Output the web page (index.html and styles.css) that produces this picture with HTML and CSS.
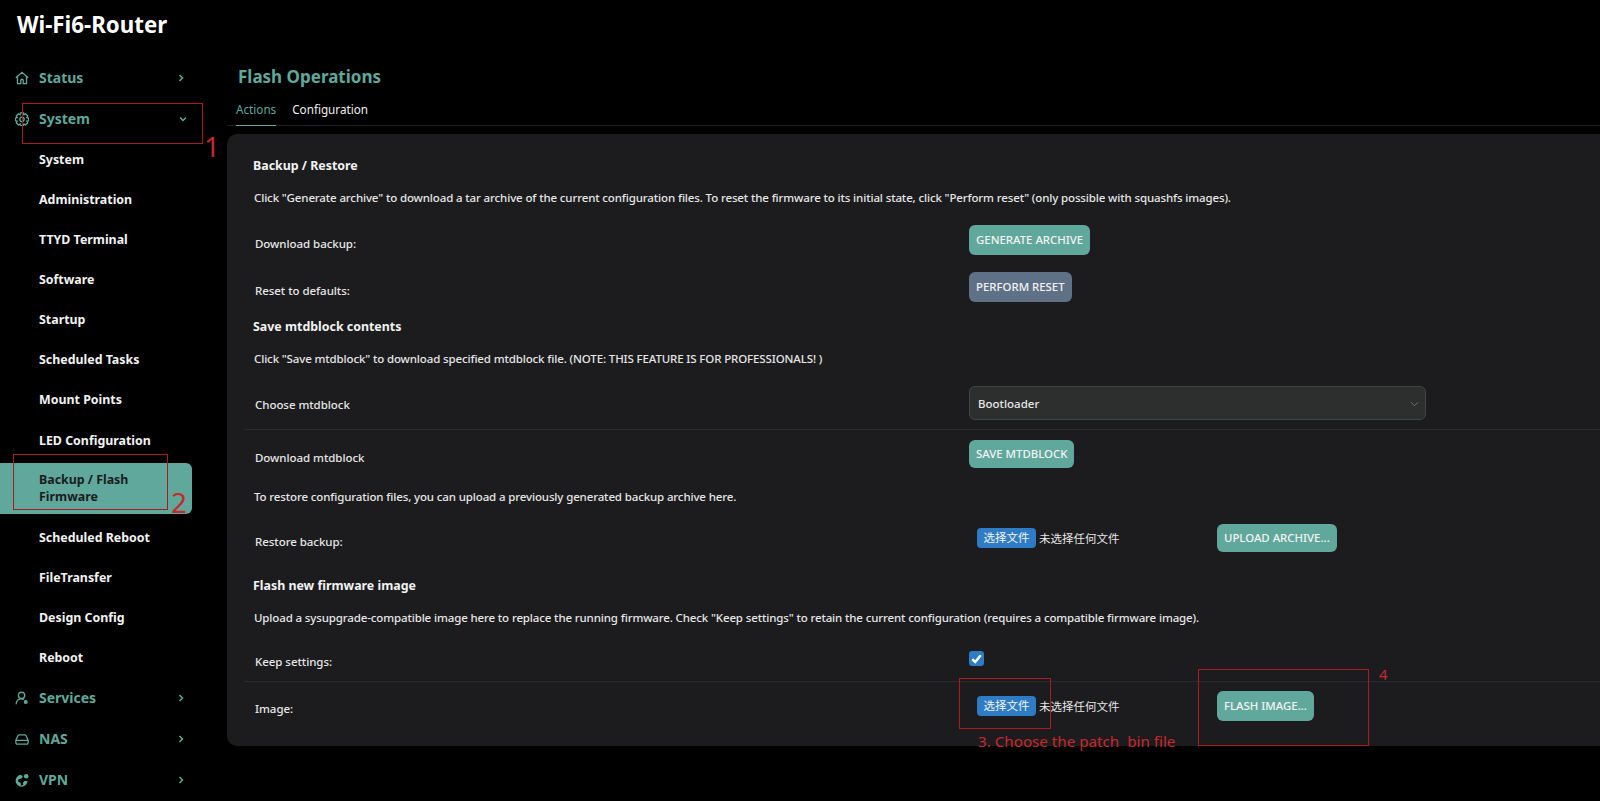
FILE: index.html

```html
<!DOCTYPE html>
<html lang="en">
<head>
  <meta charset="UTF-8">
  <title>Wi-Fi6-Router - Flash Operations</title>
  <link rel="stylesheet" href="styles.css">
</head>
<body>
  <div class="app">
    <aside class="sidebar">
      <div class="brand">Wi-Fi6-Router</div>
      <nav class="nav">
        <a class="nav-top">
          <svg class="nav-icon" viewBox="0 0 16 16"><path d="M1 7.800 8 1.500l7 6.300M2.800 6.400V14.500h3.800v-3.700a1.400 1.400 0 0 1 2.800 0v3.700h3.800V6.400"/></svg>
          <span class="nav-label">Status</span>
          <svg class="chev" viewBox="0 0 8 8"><path d="M2.500 1 5.500 4 2.500 7"/></svg>
        </a>
        <a class="nav-top">
          <svg class="nav-icon" viewBox="0 0 16 16"><path d="M6.300 1h3.400l.5 2.100 1.900-1 2.400 2.400-1.100 1.900 2.100.6v2.800l-2 .6 1 1.900-2.400 2.400-1.900-1-.5 1.900H6.300l-.5-1.900-1.900 1-2.400-2.400 1-1.900-2-.6V7l2.100-.6-1.100-1.900 2.400-2.400 1.900 1z"/><circle cx="8" cy="8.400" r="2.500"/></svg>
          <span class="nav-label">System</span>
          <svg class="chev open" viewBox="0 0 8 8"><path d="M1 2.500 4 5.500 7 2.500"/></svg>
        </a>
        <a class="nav-sub">System</a>
        <a class="nav-sub">Administration</a>
        <a class="nav-sub">TTYD Terminal</a>
        <a class="nav-sub">Software</a>
        <a class="nav-sub">Startup</a>
        <a class="nav-sub">Scheduled Tasks</a>
        <a class="nav-sub">Mount Points</a>
        <a class="nav-sub gap">LED Configuration</a>
        <a class="nav-sub active">Backup / Flash<br>Firmware</a>
        <a class="nav-sub">Scheduled Reboot</a>
        <a class="nav-sub">FileTransfer</a>
        <a class="nav-sub">Design Config</a>
        <a class="nav-sub">Reboot</a>
        <a class="nav-top">
          <svg class="nav-icon" viewBox="0 0 16 16"><circle cx="7.500" cy="5" r="3.600"/><path d="M1.300 15c0-3.700 2.400-6.100 6.200-6.100 1 0 1.900.2 2.700.6"/><circle class="solid" cx="12.300" cy="12.500" r="2.300"/></svg>
          <span class="nav-label">Services</span>
          <svg class="chev" viewBox="0 0 8 8"><path d="M2.500 1 5.500 4 2.500 7"/></svg>
        </a>
        <a class="nav-top">
          <svg class="nav-icon" viewBox="0 0 16 16"><path d="M1 9.500 3.200 4.500a2 2 0 0 1 1.800-1.200h6a2 2 0 0 1 1.800 1.200L15 9.500M1 9.500h14v2.800a1.500 1.500 0 0 1-1.500 1.500h-11A1.500 1.500 0 0 1 1 12.300z"/></svg>
          <span class="nav-label">NAS</span>
          <svg class="chev" viewBox="0 0 8 8"><path d="M2.500 1 5.500 4 2.500 7"/></svg>
        </a>
        <a class="nav-top">
          <svg class="nav-icon" viewBox="0 0 16 16"><path class="solid" d="M7 2a6.800 6.800 0 1 0 7.300 7h-3.600L9 11.200l.6 2.300-2.700 1-.6-3.400L3.500 9.700 4 7l3.400-.6L9 4.500z"/><circle class="solid" cx="12.800" cy="3.600" r="2.600"/></svg>
          <span class="nav-label">VPN</span>
          <svg class="chev" viewBox="0 0 8 8"><path d="M2.500 1 5.500 4 2.500 7"/></svg>
        </a>
      </nav>
    </aside>

    <main class="main">
      <h2 class="page-title">Flash Operations</h2>
      <div class="tabs">
        <a class="tab active">Actions</a>
        <a class="tab">Configuration</a>
      </div>

      <section class="panel">
        <h3 class="sec-title">Backup / Restore</h3>
        <p class="sec-desc">Click "Generate archive" to download a tar archive of the current configuration files. To reset the firmware to its initial state, click "Perform reset" (only possible with squashfs images).</p>
        <div class="row h47">
          <label>Download backup:</label>
          <div class="field"><button class="btn">GENERATE ARCHIVE</button></div>
        </div>
        <div class="row h45">
          <label>Reset to defaults:</label>
          <div class="field"><button class="btn grey">PERFORM RESET</button></div>
        </div>

        <h3 class="sec-title">Save mtdblock contents</h3>
        <p class="sec-desc">Click "Save mtdblock" to download specified mtdblock file. (NOTE: THIS FEATURE IS FOR PROFESSIONALS! )</p>
        <div class="row h44 lined">
          <label>Choose mtdblock</label>
          <div class="field">
            <div class="select">Bootloader
              <svg class="select-arrow" viewBox="0 0 10 6"><path d="M1 1 5 5 9 1"/></svg>
            </div>
          </div>
        </div>
        <div class="row h57 pad-more">
          <label class="up-label">Download mtdblock</label>
          <div class="field"><button class="btn low">SAVE MTDBLOCK</button></div>
        </div>
        <p class="sec-desc tight">To restore configuration files, you can upload a previously generated backup archive here.</p>
        <div class="row h52">
          <label class="up-label">Restore backup:</label>
          <div class="field file-field">
            <div class="file-pick"><span class="file-btn">选择文件</span><span class="file-none">未选择任何文件</span></div>
            <button class="btn low">UPLOAD ARCHIVE...</button>
          </div>
        </div>

        <h3 class="sec-title">Flash new firmware image</h3>
        <p class="sec-desc">Upload a sysupgrade-compatible image here to replace the running firmware. Check "Keep settings" to retain the current configuration (requires a compatible firmware image).</p>
        <div class="row h37 lined keep">
          <label>Keep settings:</label>
          <div class="field"><span class="check"><svg viewBox="0 0 14 14"><path d="M3 7.500 5.800 10.200 11 4"/></svg></span></div>
        </div>
        <div class="row pad-top">
          <label class="up-label">Image:</label>
          <div class="field file-field">
            <div class="file-pick"><span class="file-btn">选择文件</span><span class="file-none">未选择任何文件</span></div>
            <button class="btn">FLASH IMAGE...</button>
          </div>
        </div>
      </section>
    </main>
  </div>

  <!-- red notes drawn over the screenshot -->
  <div class="mark mark-1"></div><span class="note note-1">1</span>
  <div class="mark mark-2"></div><span class="note note-2">2</span>
  <div class="mark mark-3"></div><span class="note note-3">3. Choose the patch&nbsp; bin file</span>
  <div class="mark mark-4"></div><span class="note note-4">4</span>
</body>
</html>
```

FILE: styles.css

```css
* {
  box-sizing: border-box;
}
html, body {
  height: 100%;
}
body {
  margin: 0;
  background: #000;
  color: #e6e6e6;
  font-family: "Noto Sans", "Noto Sans CJK SC", sans-serif;
  font-size: 13px;
  overflow: hidden;
}
.app {
  display: flex;
  height: 801px;
}

/* sidebar */
.sidebar {
  width: 227px;
  flex-shrink: 0;
}
.brand {
  height: 57px;
  padding: 8px 0 0 17px;
  font-size: 22.300px;
  line-height: 34px;
  font-weight: 700;
  color: #fff;
}
.nav {
  display: flex;
  flex-direction: column;
}
.nav-top {
  display: flex;
  align-items: center;
  height: 41px;
  padding-left: 15px;
  font-size: 14px;
  font-weight: 700;
  color: #5fa89b;
}
.nav-icon {
  width: 14px;
  height: 14px;
  margin-right: 10px;
  fill: none;
  stroke: #5fa89b;
  stroke-width: 1.500;
}
.nav-icon .solid {
  fill: #5fa89b;
  stroke: none;
}
.nav-label {
  flex: 1;
}
.chev {
  width: 8px;
  height: 8px;
  margin-right: 42px;
  fill: none;
  stroke: #5fa89b;
  stroke-width: 1.500;
}
.chev.open {
  margin-right: 40px;
}
.nav-sub {
  display: flex;
  align-items: center;
  height: 40px;
  padding-left: 39px;
  font-size: 12.400px;
  font-weight: 700;
  color: #f2f2f2;
}
.nav-sub.gap {
  margin-top: 1px;
}
.nav-sub.active {
  height: 51px;
  margin: 3px 35px 3px 0;
  padding-bottom: 2px;
  border-radius: 0 6px 6px 0;
  background: #5fa89b;
  color: #1c1c1e;
  line-height: 17px;
}

/* main column */
.main {
  flex: 1;
  min-width: 0;
}
.page-title {
  margin: 0;
  height: 92px;
  padding: 63px 0 0 11px;
  font-size: 17px;
  line-height: 28px;
  font-weight: 700;
  color: #5fa89b;
}
.tabs {
  display: flex;
  height: 34px;
  padding-left: 9px;
  border-bottom: 1px solid #222;
}
.tab {
  height: 34px;
  line-height: 34px;
  margin-right: 16px;
  font-size: 11.700px;
  color: #f0f0f0;
}
.tab.active {
  color: #5fa89b;
  border-bottom: 1px solid #5fa89b;
}

/* panel */
.panel {
  height: 612px;
  margin-top: 8px;
  padding: 22px 0 0 17px;
  background: #1c1c1e;
  border-radius: 10px 0 0 10px;
}
.sec-title {
  margin: 0;
  padding-left: 9px;
  height: 20px;
  font-size: 12.400px;
  line-height: 20px;
  font-weight: 700;
  color: #f2f2f2;
}
.sec-desc {
  margin: 12px 0 17px;
  padding-left: 10px;
  height: 20px;
  font-size: 11.500px;
  letter-spacing: -0.130px;
  line-height: 20px;
  font-weight: 500;
  white-space: nowrap;
}
.sec-desc.tight {
  margin: 0 0 17px;
}
.row {
  display: grid;
  grid-template-columns: 725px 1fr;
  align-items: start;
}
.h37 { height: 37px; }
.h44 { height: 44px; }
.h45 { height: 45px; }
.h47 { height: 47px; }
.h52 { height: 52px; }
.h57 { height: 57px; }
.row.lined {
  border-bottom: 1px solid #2a2a2c;
}
.row.pad-top {
  padding-top: 9px;
}
.row.pad-more {
  padding-top: 10px;
}
.row.keep {
  padding-top: 7px;
}
.row label {
  padding: 9px 0 0 11px;
  font-size: 11.500px;
  letter-spacing: -0.050px;
  line-height: 20px;
  font-weight: 500;
}
.row label.up-label {
  padding-top: 8px;
}
.row.keep label {
  padding-top: 0;
}
.field {
  display: flex;
  align-items: center;
}
.btn {
  height: 30px;
  padding: 0 7px 2px;
  border: 0;
  border-radius: 6px;
  background: #5fa89b;
  color: #f4f4f4;
  font-family: inherit;
  font-size: 11.400px;
  font-weight: 500;
}
.btn.grey {
  background: #5f7186;
}
.btn.low {
  height: 28px;
}
.select {
  position: relative;
  width: 457px;
  height: 34px;
  padding-left: 8px;
  border: 1px solid #424444;
  border-radius: 6px;
  background: #2d2f2e;
  font-size: 11.500px;
  line-height: 34px;
  font-weight: 500;
}
.select-arrow {
  position: absolute;
  right: 6px;
  top: 14px;
  width: 9px;
  height: 6px;
  fill: none;
  stroke: #777;
}
.file-field {
  padding-left: 8px;
}
.file-pick {
  display: flex;
  align-items: center;
  width: 240px;
}
.file-btn {
  height: 20px;
  width: 59px;
  margin-right: 3px;
  border-radius: 4px;
  background: #2e7cc4;
  color: #f4f4f4;
  font-size: 11.500px;
  line-height: 20px;
  text-align: center;
}
.file-none {
  font-size: 11.500px;
}
.check {
  display: block;
  width: 15px;
  height: 15px;
  margin-top: -1px;
  border-radius: 3px;
  background: #2e7cc4;
}
.check svg {
  display: block;
  fill: none;
  stroke: #fff;
  stroke-width: 2.200;
}

/* annotations */
.mark {
  position: absolute;
  border: 1px solid #a81c1c;
}
.note {
  position: absolute;
  color: #c8282c;
  line-height: 1;
}
.mark-1 { left: 22px; top: 103px; width: 181px; height: 41px; }
.mark-2 { left: 13px; top: 454px; width: 155px; height: 56px; }
.mark-3 { left: 959px; top: 678px; width: 92px; height: 51px; }
.mark-4 { left: 1198px; top: 669px; width: 171px; height: 77px; }
.note-1 { left: 204px; top: 132px; font-size: 28px; }
.note-2 { left: 171px; top: 488px; font-size: 28px; }
.note-3 { left: 978px; top: 734px; font-size: 15.200px; white-space: nowrap; }
.note-4 { left: 1379px; top: 667px; font-size: 15px; }
```
